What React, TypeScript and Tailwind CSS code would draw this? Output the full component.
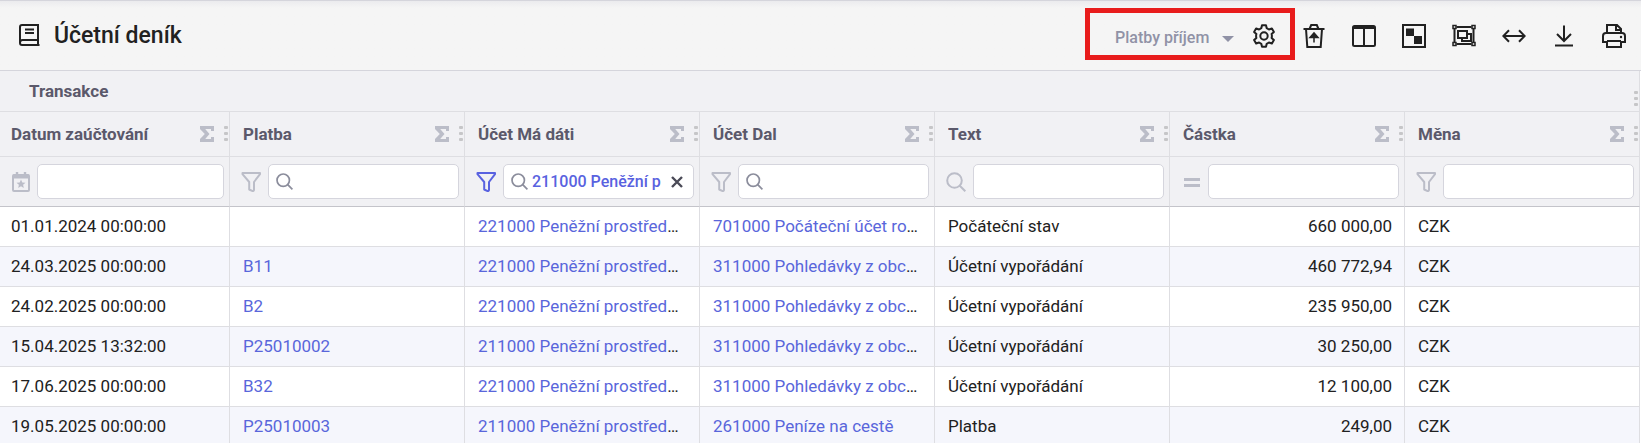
import type { ReactNode } from "react";

type Filter = "date" | "funnel" | "search" | "equals";

type Column = {
  id: string;
  label: string;
  filter: Filter;
  lookup?: boolean;
  value?: string;
};

const columns: Column[] = [
  { id: "date", label: "Datum zaúčtování", filter: "date" },
  { id: "payment", label: "Platba", filter: "funnel", lookup: true },
  { id: "debit", label: "Účet Má dáti", filter: "funnel", lookup: true, value: "211000 Peněžní p" },
  { id: "credit", label: "Účet Dal", filter: "funnel", lookup: true },
  { id: "text", label: "Text", filter: "search" },
  { id: "amount", label: "Částka", filter: "equals" },
  { id: "currency", label: "Měna", filter: "funnel" },
];

const rows = [
  ["01.01.2024 00:00:00", "", "221000 Peněžní prostředky BÚ", "701000 Počáteční účet rozv.", "Počáteční stav", "660 000,00", "CZK"],
  ["24.03.2025 00:00:00", "B11", "221000 Peněžní prostředky BÚ", "311000 Pohledávky z obchodu", "Účetní vypořádání", "460 772,94", "CZK"],
  ["24.02.2025 00:00:00", "B2", "221000 Peněžní prostředky BÚ", "311000 Pohledávky z obchodu", "Účetní vypořádání", "235 950,00", "CZK"],
  ["15.04.2025 13:32:00", "P25010002", "211000 Peněžní prostředky PO", "311000 Pohledávky z obchodu", "Účetní vypořádání", "30 250,00", "CZK"],
  ["17.06.2025 00:00:00", "B32", "221000 Peněžní prostředky BÚ", "311000 Pohledávky z obchodu", "Účetní vypořádání", "12 100,00", "CZK"],
  ["19.05.2025 00:00:00", "P25010003", "211000 Peněžní prostředky PO", "261000 Peníze na cestě", "Platba", "249,00", "CZK"],
];

export default function App() {
  return (
    <div className="flex h-screen flex-col overflow-hidden bg-white font-['Roboto',sans-serif] text-[17px] leading-6 text-[#212121]">
      <PageHeader />
      <main className="min-h-0 flex-1 overflow-hidden pr-px">
        <JournalTable />
      </main>
    </div>
  );
}

function PageHeader() {
  return (
    <header className="flex h-[71px] shrink-0 items-center border-y border-[#d5d5dc] bg-linear-to-b from-[#ebebee] to-[#f5f5f5] to-10% pr-[15px] pl-4">
      <div className="flex items-center gap-3.5">
        <BookIcon />
        <h1 className="text-[23px] leading-8 font-medium">Účetní deník</h1>
      </div>

      <div className="mb-1 ml-auto flex h-[52px] items-center border-[5px] border-[#e81c1c] pt-1 pr-3.5 pl-[25px]">
        <div className="relative mr-[18px] flex items-center">
          <select
            aria-label="Pohled"
            defaultValue="income"
            className="w-[119px] appearance-none bg-transparent pt-1 text-base font-medium text-[#9092a6] outline-none"
          >
            <option value="income">Platby příjem</option>
          </select>
          <svg className="pointer-events-none absolute top-3.5 right-0 h-1.5 w-3" viewBox="0 0 12 6" fill="#9092a6">
            <path d="M0 0h12L6 6z" />
          </svg>
        </div>
        <ToolButton label="Nastavení">
          <path
            strokeLinejoin="round"
            d="M10 1.2h4l.7 3 2.2 1.3 3-1 2 3.4-2.3 2.1a7 7 0 0 1 0 4l2.3 2.1-2 3.4-3-1-2.2 1.3-.7 3h-4l-.7-3-2.2-1.3-3 1-2-3.4 2.3-2.1a7 7 0 0 1 0-4L2.1 7.9l2-3.400 3 1 2.200-1.300z"
          />
          <circle cx="12" cy="12" r="3.7" />
        </ToolButton>
      </div>

      <div className="ml-[7px] flex items-center gap-[26px]">
        <ToolButton label="Obnovit z koše">
          <path d="M1.5 5h21M7.5 5l1.7-4h5.6l1.7 4M4 5l1.3 18h13.4L20 5" />
          <path d="M12 18.5v-8M8 13.5l4-4.5 4 4.5z" fill="currentColor" strokeWidth="1.5" />
        </ToolButton>
        <ToolButton label="Sloupce">
          <rect x="1" y="2" width="22" height="20" rx="1.5" />
          <path d="M1 3.5h22" strokeWidth="3" />
          <path d="M12 3v19" />
        </ToolButton>
        <ToolButton label="Barvy">
          <rect x="1" y="1" width="22" height="22" />
          <path d="M4 4.5h8V12H4zM12 12h8v8h-8z" fill="currentColor" stroke="none" />
        </ToolButton>
        <ToolButton label="Seskupit">
          <path d="M4.5 3h15M4.5 20h15M2.5 5v13M21.5 5v13" />
          <path d="M6 7h9v7H6zM15 10h4v7h-9v-3" />
          <g strokeWidth="1.5">
            <rect x="1" y="1.5" width="3" height="3" />
            <rect x="20" y="1.5" width="3" height="3" />
            <rect x="1" y="18.5" width="3" height="3" />
            <rect x="20" y="18.5" width="3" height="3" />
          </g>
        </ToolButton>
        <ToolButton label="Přizpůsobit šířku">
          <path d="M1.5 12h21M7 6.3 1.3 12 7 17.7M17 6.3l5.7 5.7-5.7 5.7" />
        </ToolButton>
        <ToolButton label="Stáhnout">
          <path d="M12 1.5v15M5 10l7 7 7-7M3 21.5h18" />
        </ToolButton>
        <ToolButton label="Tisk">
          <path d="M5 9V1h10l4 4v4M14 1v5h5" />
          <path d="M5 18H1v-6q0-3 3-3h16q3 0 3 3v6h-4M5 17h14" />
          <path d="M5 17v6h14v-6" />
          <circle cx="19" cy="13" r="1.2" fill="currentColor" stroke="none" />
        </ToolButton>
      </div>
    </header>
  );
}

function ToolButton({ label, children }: { label: string; children: ReactNode }) {
  return (
    <button type="button" aria-label={label} className="size-6 shrink-0 text-[#212121]">
      <svg className="size-6" viewBox="0 0 24 24" fill="none" stroke="currentColor" strokeWidth="2">
        {children}
      </svg>
    </button>
  );
}

function JournalTable() {
  return (
    <table className="w-full table-fixed border-separate border-spacing-0">
      <colgroup>
        <col className="w-[230px]" />
        <col span={6} />
      </colgroup>
      <thead className="bg-[#f1f1f4] text-left text-[#5b596b]">
        <tr>
          <th colSpan={7} className="h-[41px] border-r border-b border-[#dedee2] p-0 pl-[29px] font-bold">
            <div className="flex items-center justify-between">
              Transakce
              <span className="mr-px pt-4">
                <DotsIcon />
              </span>
            </div>
          </th>
        </tr>
        <tr>
          {columns.map((col) => (
            <th key={col.id} className="h-[45px] border-r border-b border-[#dedee2] p-0 pl-[13px] font-bold first:pl-[11px]">
              <div className="flex items-center">
                <span className="flex-1 truncate">{col.label}</span>
                <button type="button" aria-label={`Součet ${col.label}`}>
                  <SigmaIcon />
                </button>
                <span className="mr-px ml-2.5">
                  <DotsIcon />
                </span>
              </div>
            </th>
          ))}
        </tr>
        <tr>
          {columns.map((col) => (
            <td key={col.id} className="h-[50px] border-r border-b border-r-[#dedee2] border-b-[#c4c4ca] p-0 pr-[5px] pl-[11px] first:pl-2.5">
              <FilterField col={col} />
            </td>
          ))}
        </tr>
      </thead>
      <tbody>
        {rows.map((row) => (
          <tr key={row[0] + row[1]} className="even:bg-[#f5f6fc]">
            {row.map((cell, i) => (
              <td
                key={columns[i].id}
                className={`h-10 truncate border-r border-b border-[#dedee2] p-0 pb-0.5 pl-[13px] first:pl-[11px] ${
                  columns[i].id === "amount" ? "pr-3 text-right" : "pr-3.5"
                }`}
              >
                {columns[i].lookup && cell ? (
                  <a href="#" className="text-[#5966db]">{cell}</a>
                ) : (
                  cell
                )}
              </td>
            ))}
          </tr>
        ))}
      </tbody>
    </table>
  );
}

function FilterField({ col }: { col: Column }) {
  return (
    <div className="flex items-center gap-[7px]">
      <button
        type="button"
        aria-label={`Typ filtru ${col.label}`}
        className={`size-5 shrink-0 ${col.value ? "text-[#5962e0]" : "text-[#bbbdc8]"}`}
      >
        <FilterIcon type={col.filter} />
      </button>
      <div className="flex h-[35px] min-w-0 flex-1 items-center rounded-[5px] border border-[#d5d5dd] bg-white px-[7px]">
        {col.lookup && <SearchIcon className="size-[17px] shrink-0 text-[#8b8d9c]" />}
        <input
          type="text"
          aria-label={`Filtr ${col.label}`}
          defaultValue={col.value}
          className="h-full min-w-0 flex-1 bg-transparent pl-1 text-base font-medium text-[#5962e0] outline-none"
        />
        {col.value && (
          <button type="button" aria-label="Vymazat filtr" className="mr-[3px] ml-2">
            <svg className="size-3" viewBox="0 0 12 12" stroke="#4a4a57" strokeWidth="2.4">
              <path d="m1 1 10 10M11 1 1 11" />
            </svg>
          </button>
        )}
      </div>
    </div>
  );
}

function FilterIcon({ type }: { type: Filter }) {
  if (type === "search") return <SearchIcon className="size-5" />;
  if (type === "equals") {
    return (
      <svg className="size-5" viewBox="0 0 20 20" fill="currentColor">
        <path d="M3 6h16v3H3zM3 12h16v3H3z" />
      </svg>
    );
  }
  if (type === "date") {
    return (
      <svg className="size-5" viewBox="0 0 20 20" fill="none" stroke="currentColor" strokeWidth="2">
        <rect x="3" y="3" width="16" height="16" rx="1" />
        <path d="M3 4.5h16" strokeWidth="4" />
        <path d="M7 0v4M15 0v4" strokeWidth="2.4" />
        <path d="m11 7.500 1.300 2.900 3.200.3-2.400 2.100.7 3.100-2.800-1.600-2.800 1.600.7-3.100-2.400-2.100 3.200-.3z" fill="currentColor" stroke="none" />
      </svg>
    );
  }
  return (
    <svg className="size-5" viewBox="0 0 20 20" fill="none" stroke="currentColor" strokeWidth="2" strokeLinejoin="round">
      <path d="M1.500 1h17.500v1.200L13 10v8q-.2 1-1.200 1.200L8.200 17.500V10L1.500 2.200z" />
    </svg>
  );
}

function SearchIcon({ className }: { className: string }) {
  return (
    <svg className={className} viewBox="0 0 20 20" fill="none" stroke="currentColor" strokeWidth="2">
      <circle cx="8.5" cy="8.5" r="7.3" />
      <path d="m13.5 13.5 5.8 5.8" />
    </svg>
  );
}

function SigmaIcon() {
  return (
    <svg className="h-4 w-3.5" viewBox="0 0 14 16" fill="#bbbdc8">
      <path d="M0 0h14v5h-3V3H5.200l4.300 5-4.300 5H11v-2h3v5H0v-3l4.800-5L0 3z" />
    </svg>
  );
}

function DotsIcon() {
  return (
    <svg className="h-4 w-1" viewBox="0 0 4 16" fill="#c6c6c8">
      <rect width="4" height="3" rx="1" y="0" />
      <rect width="4" height="3" rx="1" y="6" />
      <rect width="4" height="3" rx="1" y="12" />
    </svg>
  );
}

function BookIcon() {
  return (
    <svg className="size-6" viewBox="0 0 24 24" fill="none" stroke="currentColor" strokeWidth="2">
      <path d="M22 16V1H6Q4 1 4 3v16q0 2 2 2h17.500M22 16H6.500Q4 16 4 18.500M22 16v5" />
      <path d="M9 5.500h9M9 9h9" />
    </svg>
  );
}
